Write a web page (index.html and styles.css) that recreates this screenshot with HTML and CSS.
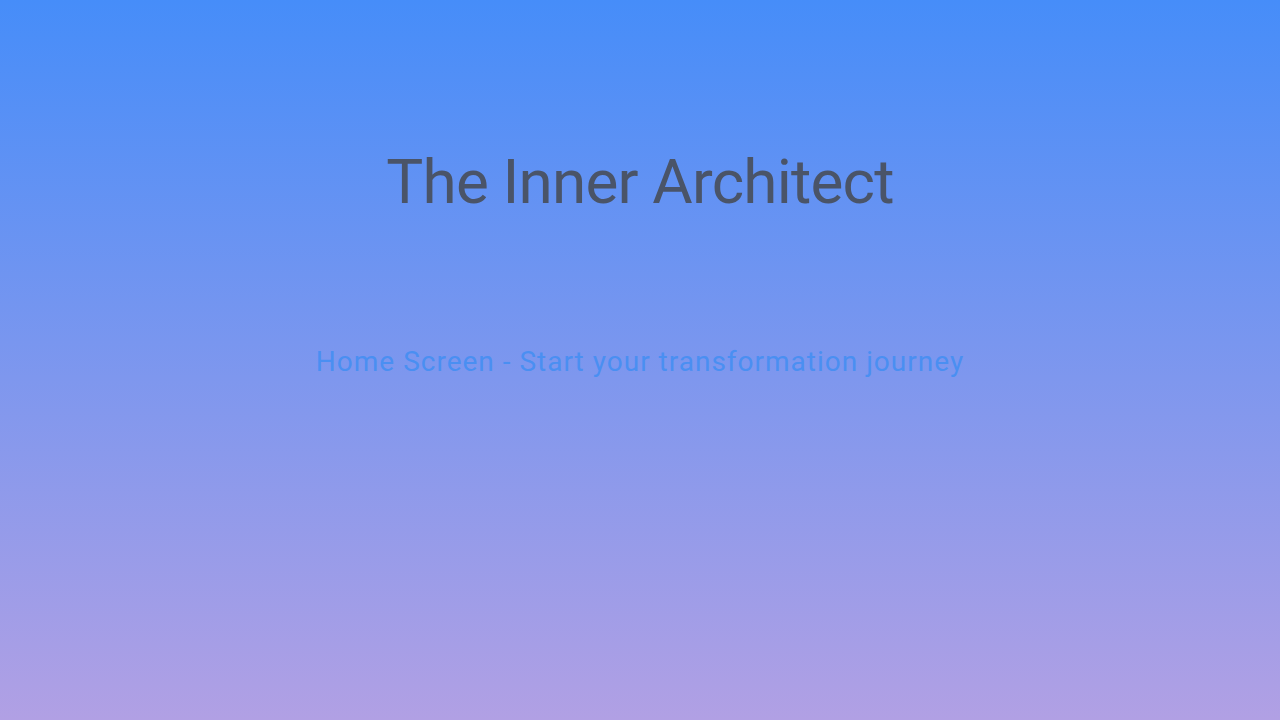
FILE: index.html
```html
<!DOCTYPE html>
<html lang="en">
<head>
<meta charset="utf-8">
<title>The Inner Architect</title>
<link rel="stylesheet" href="styles.css">
</head>
<body>
<main class="screen">
  <h1 class="title">The Inner Architect</h1>
  <p class="subtitle">Home Screen - Start your transformation journey</p>
</main>
</body>
</html>
```

FILE: styles.css
```css
html, body {
  margin: 0;
  padding: 0;
  height: 100%;
}
body {
  background: linear-gradient(to bottom, #468df9 0%, #b1a0e4 100%);
  font-family: Roboto, "Noto Sans", sans-serif;
}
.screen {
  height: 720px;
  display: flex;
  flex-direction: column;
  align-items: center;
  padding-top: 142px;
  box-sizing: border-box;
}
.title {
  margin: 0;
  font-size: 62px;
  font-weight: 400;
  line-height: 80px;
  letter-spacing: -0.8px;
  color: #4a5468;
}
.subtitle {
  margin: 0;
  margin-top: 122px;
  font-size: 28px;
  line-height: 36px;
  letter-spacing: 1px;
  color: #4a8ff2;
}
```
